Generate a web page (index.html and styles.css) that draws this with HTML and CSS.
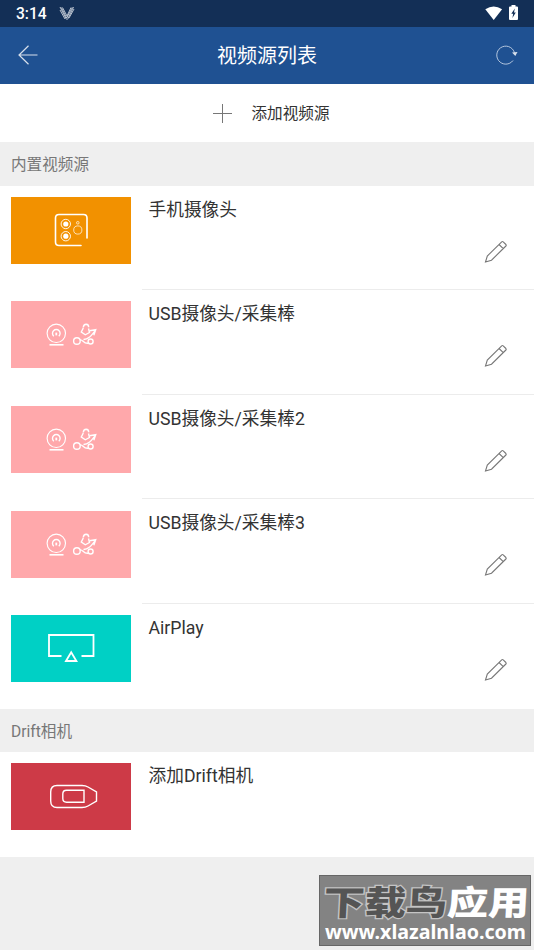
FILE: index.html
```html
<!DOCTYPE html>
<html lang="zh-CN">

<head>
    <meta charset="UTF-8">
    <meta name="viewport" content="width=device-width, initial-scale=1.0">
    <title>视频源列表</title>
    <link rel="stylesheet" href="styles.css">
</head>

<body>
    <!-- Ícones usados mais de uma vez -->
    <svg class="icons-defs">
        <symbol id="pencil" viewBox="0 0 24 24">
            <path d="M1.5 22 L3.3 16 L17.7 1.8 Q18.4 1.2 19.2 1.9 L21.9 4.5 Q22.6 5.3 21.9 6 L7.5 20.2 Z M15 4.5 L19.3 8.6" />
        </symbol>
        <symbol id="usb-camera" viewBox="0 0 120 67">
            <circle cx="45.3" cy="32.3" r="9.2" />
            <path d="M42.8 35.2 A3.8 3.8 0 1 1 47.8 35.2" stroke-width="1.4" />
            <path d="M45.3 31.6 V34.4" stroke-width="1.8" />
            <path d="M38.5 43.8 H52.5" stroke-width="1.6" />
            <g stroke-width="1.4">
                <circle cx="65.9" cy="40" r="3.3" />
                <circle cx="79.6" cy="40.5" r="2.5" />
                <path d="M68.8 39 C72 37.8 72.2 43.2 77.4 42.2 M72.5 38.5 C77 38.3 79.5 35.8 84 29.8 M78.5 29.8 L84.7 28.7 L82.8 34.3" />
                <path d="M72.3 27 L70.3 31 L74.3 33.8 L78.5 31.5 L77.5 27.5 M72.3 26.5 Q72.4 23.2 75.2 23.2 Q77.8 23.4 77.7 26.3" />
            </g>
        </symbol>
    </svg>

    <div class="status-bar">
        <span class="clock">3:14</span>
        <svg class="status-logo" width="16" height="15" viewBox="0 0 16 15">
            <path d="M1 1 L7.5 13.5 M3.5 1.5 L8 10 M1 4 L6 13 M14.5 1 L8.5 13.5 M12 1.5 L8 10 M15 3 L10 12 M2.3 1.5 L7.7 12 L13.3 1.5" />
        </svg>
        <svg class="wifi" width="18" height="15" viewBox="0 0 18 15">
            <path d="M0.3 3.3 Q8.7 -2.5 17.1 3.3 L8.7 14 Z" />
        </svg>
        <svg class="battery" width="9" height="16" viewBox="0 0 9 16">
            <path class="battery-body" d="M2.5 0 H6.5 V1.5 H8 Q9 1.5 9 2.5 V14 Q9 15 8 15 H1 Q0 15 0 14 V2.5 Q0 1.5 1 1.5 H2.5 Z" />
            <path class="battery-bolt" d="M5.8 3.5 L2.3 8.7 H4.2 L3.4 13 L6.8 7.5 H5 Z" />
        </svg>
    </div>

    <header class="app-bar">
        <svg class="back" width="20" height="20" viewBox="0 0 20 20">
            <path d="M19.5 10 H1 M10.5 0.7 L1 10 L10.5 19.3" />
        </svg>
        <h1>视频源列表</h1>
        <svg class="refresh" width="22" height="20" viewBox="0 0 22 20">
            <path d="M17 15.5 A9 9 0 1 1 18.7 9" />
            <path class="refresh-head" d="M16 7.5 L21.5 7 L19.3 11 Z" />
        </svg>
    </header>

    <div class="add-source">
        <svg width="19" height="19" viewBox="0 0 19 19">
            <path d="M0 9.5 H19 M9.5 0 V19" />
        </svg>
        <span>添加视频源</span>
    </div>

    <h2 class="section">内置视频源</h2>
    <ul class="sources">
        <li class="source">
            <svg class="thumb orange" viewBox="0 0 120 67">
                <path d="M70 48.5 H48 Q44.5 48.5 44.5 45 V21 Q44.5 17.5 48 17.5 H72.5 Q76 17.5 76 21 V41" stroke-width="1.6" stroke-linecap="round" />
                <g stroke-width="0.9">
                    <circle cx="54.8" cy="27" r="4.7" />
                    <circle cx="54.8" cy="39.2" r="4.7" />
                    <circle cx="66.8" cy="33" r="4.1" stroke-width="0.7" />
                    <circle cx="66.8" cy="25.8" r="1.3" stroke-width="0.7" />
                </g>
                <circle class="dot" cx="54.8" cy="27" r="2.6" />
                <circle class="dot" cx="54.8" cy="39.2" r="2.6" />
            </svg>
            <div class="info">
                <span class="name">手机摄像头</span>
                <svg class="edit"><use href="#pencil" /></svg>
            </div>
        </li>
        <li class="source">
            <svg class="thumb pink" viewBox="0 0 120 67"><use href="#usb-camera" /></svg>
            <div class="info">
                <span class="name">USB摄像头/采集棒</span>
                <svg class="edit"><use href="#pencil" /></svg>
            </div>
        </li>
        <li class="source">
            <svg class="thumb pink" viewBox="0 0 120 67"><use href="#usb-camera" /></svg>
            <div class="info">
                <span class="name">USB摄像头/采集棒2</span>
                <svg class="edit"><use href="#pencil" /></svg>
            </div>
        </li>
        <li class="source">
            <svg class="thumb pink" viewBox="0 0 120 67"><use href="#usb-camera" /></svg>
            <div class="info">
                <span class="name">USB摄像头/采集棒3</span>
                <svg class="edit"><use href="#pencil" /></svg>
            </div>
        </li>
        <li class="source">
            <svg class="thumb teal" viewBox="0 0 120 67">
                <path d="M50.5 41 H38 V20 H82.5 V41 H70.5 M55 46 L60.2 37.3 L65.4 46 Z" stroke-width="1.8" />
            </svg>
            <div class="info">
                <span class="name">AirPlay</span>
                <svg class="edit"><use href="#pencil" /></svg>
            </div>
        </li>
    </ul>

    <h2 class="section">Drift相机</h2>
    <ul class="sources">
        <li class="source">
            <svg class="thumb red" viewBox="0 0 120 67">
                <path d="M46 22.5 H71 Q74.5 22.5 77 24 L85.5 29 V38 L77 43 Q74.5 44.5 71 44.5 H46 Q39.7 44.5 39.7 38 V29 Q39.7 22.5 46 22.5 Z" stroke-width="1.4" />
                <path d="M55.5 27.3 H73 V39.2 H55.5 Q51.8 39.2 51.8 35.5 V31 Q51.8 27.3 55.5 27.3 Z" stroke-width="1.4" />
            </svg>
            <div class="info">
                <span class="name">添加Drift相机</span>
            </div>
        </li>
    </ul>

    <div class="watermark">
        <svg width="210" height="69" viewBox="0 0 210 69">
            <g class="watermark-title" transform="translate(3 39) skewX(-3) scale(1.21 1)">
                <text class="dark" x="0" y="0">下载鸟</text>
                <text x="102" y="0">应用</text>
            </g>
            <text class="watermark-url" x="5" y="63" textLength="201" lengthAdjust="spacingAndGlyphs">www.xlazalnlao.com</text>
        </svg>
    </div>
</body>

</html>
```
FILE: styles.css
```css
* {
    box-sizing: border-box;
}

body {
    margin: 0;
    height: 950px;
    overflow: hidden;
    background-color: #efefef;
    color: #333;
    font-family: Roboto, "Noto Sans CJK SC", sans-serif;
}

svg {
    display: block;
    flex: none;
    fill: none;
    stroke: white;
}

.icons-defs {
    display: none;
}

/* Barra de status */
.status-bar {
    display: flex;
    align-items: center;
    height: 27px;
    padding: 0 15px 0 16px;
    background-color: #132f56;
    color: white;
}

.clock {
    width: 31px;
    margin-right: 12px;
    font-size: 15.6px;
    font-weight: 500;
}

.status-logo {
    stroke: #ccd3dc;
    stroke-width: 0.9;
}

.wifi {
    margin-left: auto;
    margin-top: -1px;
    fill: white;
    stroke: none;
}

.battery {
    margin-left: 6px;
    margin-top: -1px;
    stroke: none;
}

.wifi,
.battery {
    position: relative;
    left: -1px;
}

.battery-body {
    fill: white;
}

.battery-bolt {
    fill: #132f56;
}

/* Cabeçalho */
.app-bar {
    display: flex;
    align-items: center;
    justify-content: space-between;
    height: 57px;
    padding: 0 16px 0 18px;
    background-color: #1f5192;
}

.app-bar h1 {
    margin: -2px 0 0;
    color: white;
    font-size: 20px;
    font-weight: 400;
}

.back,
.refresh {
    margin-top: -2px;
}

.back {
    stroke: #d7e0ec;
    stroke-width: 1.2;
}

.refresh {
    stroke: #b4c6de;
    stroke-width: 1;
}

.refresh-head {
    fill: #d7e0ec;
    stroke: none;
}

.add-source {
    display: flex;
    align-items: center;
    justify-content: center;
    gap: 20px;
    height: 58px;
    padding-left: 8px;
    background-color: white;
    font-size: 15.6px;
}

.add-source span {
    margin-top: -2px;
}

.add-source svg {
    stroke: #777;
    stroke-width: 1;
}

.section {
    height: 43.5px;
    margin: 0;
    padding-left: 11px;
    color: #777;
    font-size: 15.6px;
    font-weight: 400;
    line-height: 47px;
}

/* Lista de fontes de vídeo */
.sources {
    margin: 0;
    padding: 0;
    list-style: none;
    background-color: white;
}

.source {
    display: flex;
    height: 104.67px;
    padding-left: 11px;
}

.thumb {
    width: 120px;
    height: 67px;
    margin: 11.2px 11px 0 0;
    stroke-width: 1.15;
}

.orange {
    background-color: #f29100;
}

.pink {
    background-color: #ffa8ab;
}

.teal {
    background-color: #00d0c5;
}

.red {
    background-color: #cd3a47;
}

.dot {
    fill: white;
    stroke: none;
}

.info {
    flex: 1;
    display: flex;
    justify-content: space-between;
    padding: 11px 26px 0 6.5px;
    border-bottom: 1px solid #ececec;
}

.source:last-child .info {
    border-bottom: none;
}

.name {
    font-size: 17.7px;
    line-height: 27px;
}

.edit {
    width: 24px;
    height: 24px;
    margin-top: 43px;
    stroke: #777;
    stroke-width: 1.1;
}

/* Marca d'água */
.watermark {
    position: absolute;
    right: 3px;
    bottom: 4px;
    width: 212px;
    height: 71px;
    border: 1px solid #666;
    background-color: #838383;
}

.watermark svg {
    fill: white;
    stroke: none;
}

.watermark-title {
    font-family: "Noto Sans CJK SC", sans-serif;
    font-size: 34px;
    font-weight: 900;
}

.watermark-title .dark {
    fill: #555;
    stroke: #c4c4c4;
    stroke-width: 2.5px;
    paint-order: stroke fill;
}

.watermark-url {
    font-family: "Noto Sans", sans-serif;
    font-size: 20px;
    font-weight: bold;
}
```
